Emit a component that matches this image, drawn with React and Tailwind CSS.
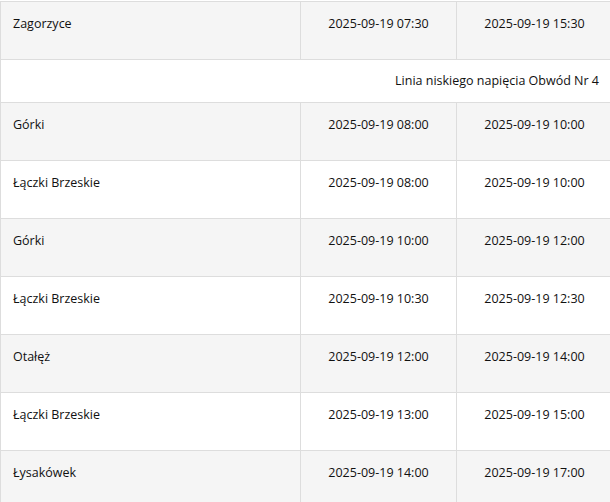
import React from 'react';

const ROWS = [
  { type: 'row', place: 'Zagorzyce', from: '2025-09-19 07:30', to: '2025-09-19 15:30' },
  { type: 'head', label: 'Linia niskiego napięcia Obwód Nr 4' },
  { type: 'row', place: 'Górki', from: '2025-09-19 08:00', to: '2025-09-19 10:00' },
  { type: 'row', place: 'Łączki Brzeskie', from: '2025-09-19 08:00', to: '2025-09-19 10:00' },
  { type: 'row', place: 'Górki', from: '2025-09-19 10:00', to: '2025-09-19 12:00' },
  { type: 'row', place: 'Łączki Brzeskie', from: '2025-09-19 10:30', to: '2025-09-19 12:30' },
  { type: 'row', place: 'Otałęż', from: '2025-09-19 12:00', to: '2025-09-19 14:00' },
  { type: 'row', place: 'Łączki Brzeskie', from: '2025-09-19 13:00', to: '2025-09-19 15:00' },
  { type: 'row', place: 'Łysakówek', from: '2025-09-19 14:00', to: '2025-09-19 17:00' },
];

export default function App() {
  let stripe = 0;
  return (
    <div className="w-[610px] h-[502px] overflow-hidden bg-white pt-px" style={{ fontFamily: '"Open Sans", "Noto Sans", sans-serif' }}>
      <table className="w-[612px] border-collapse text-[12.5px] text-[#111] table-fixed">
        <colgroup>
          <col className="w-[300px]" />
          <col className="w-[156px]" />
          <col className="w-[156px]" />
        </colgroup>
        <tbody>
          {ROWS.map((r, i) => {
            if (r.type === 'head') {
              stripe = 0;
              return (
                <tr key={i} className="h-[43px] bg-white">
                  <td colSpan={3} className="border border-[#dddddd] px-[13px] pt-[12px] align-top text-right leading-[18px]">
                    {r.label}
                  </td>
                </tr>
              );
            }
            const grey = stripe % 2 === 0;
            stripe++;
            return (
              <tr key={i} className={grey ? 'h-[58px] bg-[#f5f5f5]' : 'h-[58px] bg-white'}>
                <td className="border border-[#dddddd] px-[12px] pt-[13px] align-top leading-[18px]">{r.place}</td>
                <td className="border border-[#dddddd] px-[12px] pt-[13px] align-top text-center leading-[18px]">{r.from}</td>
                <td className="border border-[#dddddd] px-[12px] pt-[13px] align-top text-center leading-[18px]">{r.to}</td>
              </tr>
            );
          })}
        </tbody>
      </table>
    </div>
  );
}
